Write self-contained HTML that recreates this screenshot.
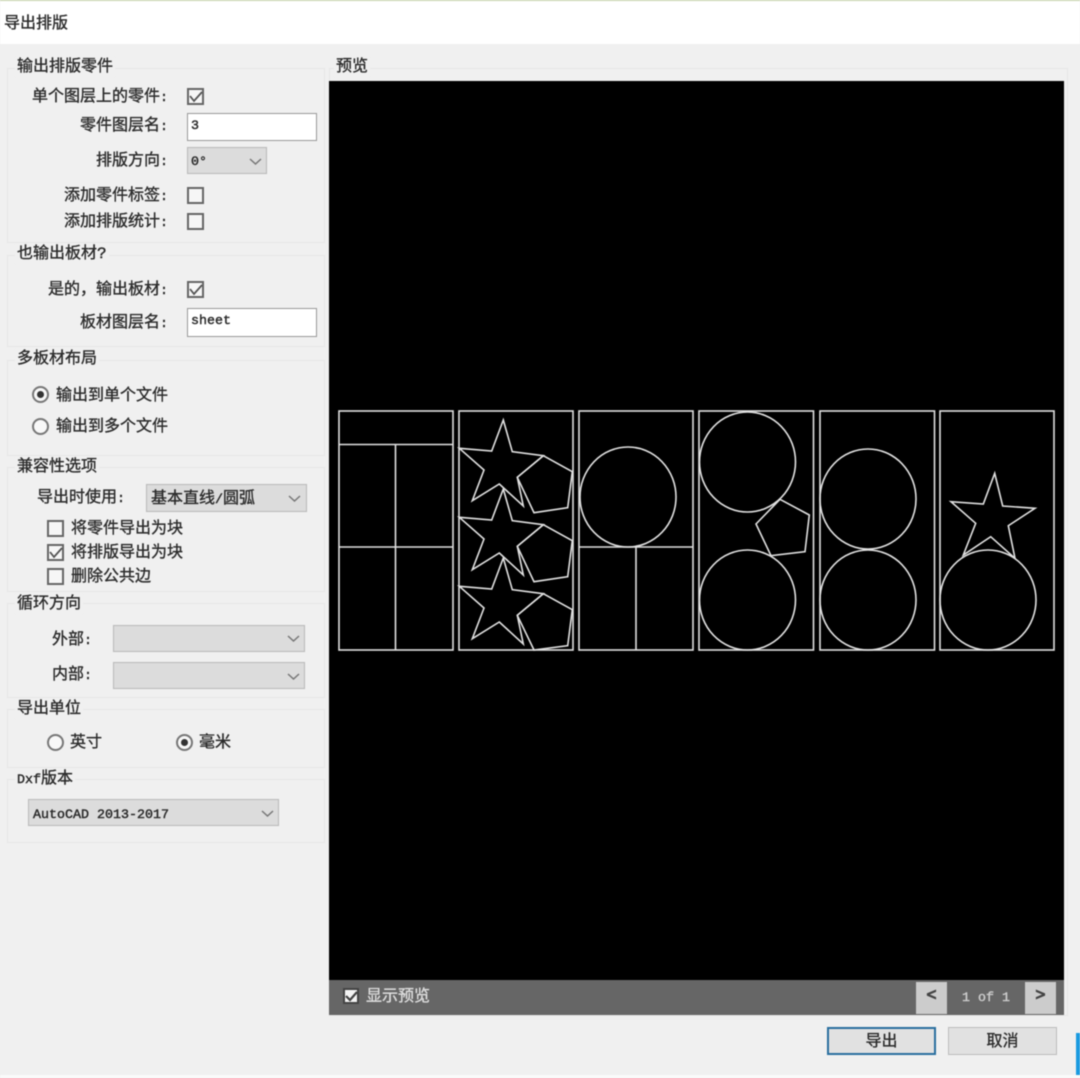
<!DOCTYPE html>
<html lang="zh"><head><meta charset="utf-8"><title>导出排版</title>
<style>
html,body{margin:0;padding:0}
body{width:1080px;height:1078px;position:relative;overflow:hidden;background:#f0f0f0;font:16px/20px "Liberation Sans","Noto Sans CJK SC",sans-serif;color:#2c2c2c}
#all{position:absolute;inset:0;filter:blur(.5px)}
#all div,#all svg{position:absolute;box-sizing:border-box}
.t{white-space:nowrap;height:20px;transform:translateY(1px);-webkit-text-stroke:.35px currentColor}
.t i{font:13.33px/20px "Liberation Mono",monospace;font-style:normal;color:#2c2c2c;-webkit-text-stroke:.45px currentColor}
.g{border:1px solid #e6e6e6}
.gt{background:#f0f0f0;padding:0 2px;margin-left:-2px}
.cb{width:17px;height:17px;border:2px solid #666;background:#f6f6f6}
.in{background:#fff;border:1.5px solid #999;font:13.33px/26px "Liberation Mono",monospace;padding-left:3px;color:#2c2c2c;-webkit-text-stroke:.45px currentColor}
.co{background:#dcdcdc;border:1.5px solid #b8b8b8}
.r{width:17px;height:17px;border:2px solid #777;border-radius:50%;background:#f8f8f8}
.r.on::after{content:"";position:absolute;left:3px;top:3px;width:7px;height:7px;border-radius:50%;background:#333}
.btn{background:#e1e1e1;text-align:center;line-height:26px;-webkit-text-stroke:.35px currentColor}
</style></head>
<body><div id="all">
<div style="left:0;top:0;width:1080px;height:44px;background:#fff"></div>
<div style="left:0;top:0;width:1080px;height:1px;background:#c6d2a8"></div>
<div style="left:0;top:1075px;width:1080px;height:3px;background:#fafafa"></div>
<div class="t" style="left:4px;top:13px">导出排版</div>

<div class="g" style="left:7px;top:68px;width:318px;height:175px"></div>
<div class="g" style="left:7px;top:255px;width:318px;height:92px"></div>
<div class="g" style="left:7px;top:360px;width:318px;height:96px"></div>
<div class="g" style="left:7px;top:467px;width:318px;height:125px"></div>
<div class="g" style="left:7px;top:603px;width:318px;height:95px"></div>
<div class="g" style="left:7px;top:709px;width:318px;height:59px"></div>
<div class="g" style="left:7px;top:779px;width:318px;height:64px"></div>
<div class="g" style="left:329px;top:68px;width:739px;height:948px"></div>

<div class="t gt" style="left:17px;top:56px">输出排版零件</div>
<div class="t gt" style="left:17px;top:243px">也输出板材<i style="font-size:16px">?</i></div>
<div class="t gt" style="left:17px;top:348px">多板材布局</div>
<div class="t gt" style="left:17px;top:456px">兼容性选项</div>
<div class="t gt" style="left:17px;top:593px">循环方向</div>
<div class="t gt" style="left:17px;top:698px">导出单位</div>
<div class="t gt" style="left:17px;top:768px"><i>Dxf</i>版本</div>
<div class="t gt" style="left:336px;top:56px">预览</div>

<div class="t" style="left:32px;top:86px">单个图层上的零件<i>:</i></div>
<div class="cb" style="left:187px;top:88px"></div>
<div class="t" style="left:80px;top:115px">零件图层名<i>:</i></div>
<div class="in" style="left:187px;top:113px;width:130px;height:28px">3</div>
<div class="t" style="left:96px;top:150px">排版方向<i>:</i></div>
<div class="co" style="left:187px;top:147px;width:80px;height:27px"></div>
<div class="t" style="left:191px;top:150px"><i>0°</i></div>
<div class="t" style="left:64px;top:185px">添加零件标签<i>:</i></div>
<div class="cb" style="left:187px;top:187px"></div>
<div class="t" style="left:64px;top:211px">添加排版统计<i>:</i></div>
<div class="cb" style="left:187px;top:213px"></div>

<div class="t" style="left:48px;top:279px">是的，输出板材<i>:</i></div>
<div class="cb" style="left:187px;top:281px"></div>
<div class="t" style="left:80px;top:312px">板材图层名<i>:</i></div>
<div class="in" style="left:187px;top:308px;width:130px;height:29px">sheet</div>

<div class="r on" style="left:32px;top:386px"></div>
<div class="t" style="left:56px;top:385px">输出到单个文件</div>
<div class="r" style="left:32px;top:418px"></div>
<div class="t" style="left:56px;top:416px">输出到多个文件</div>

<div class="t" style="left:37px;top:487px">导出时使用<i>:</i></div>
<div class="co" style="left:146px;top:484px;width:161px;height:28px"></div>
<div class="t" style="left:151px;top:488px">基本直线<i>/</i>圆弧</div>
<div class="cb" style="left:47px;top:520px"></div>
<div class="t" style="left:71px;top:518px">将零件导出为块</div>
<div class="cb" style="left:47px;top:544px"></div>
<div class="t" style="left:71px;top:542px">将排版导出为块</div>
<div class="cb" style="left:47px;top:568px"></div>
<div class="t" style="left:71px;top:566px">删除公共边</div>

<div class="t" style="left:52px;top:629px">外部<i>:</i></div>
<div class="co" style="left:113px;top:625px;width:192px;height:27px"></div>
<div class="t" style="left:52px;top:664px">内部<i>:</i></div>
<div class="co" style="left:113px;top:662px;width:192px;height:27px"></div>

<div class="r" style="left:47px;top:734px"></div>
<div class="t" style="left:70px;top:732px">英寸</div>
<div class="r on" style="left:176px;top:734px"></div>
<div class="t" style="left:199px;top:732px">毫米</div>

<div class="co" style="left:28px;top:799px;width:251px;height:27px"></div>
<div class="t" style="left:33px;top:803px"><i>AutoCAD 2013-2017</i></div>

<div style="left:329px;top:81px;width:735px;height:899px;background:#000"></div>
<div style="left:329px;top:980px;width:735px;height:35px;background:#666"></div>
<div class="cb" style="left:343px;top:988px;width:16px;height:16px;background:#f4f4f4;border-color:#444"></div>
<div class="t" style="left:366px;top:986px;color:#ddd">显示预览</div>
<div style="left:916px;top:982px;width:31px;height:32px;background:#ccc"></div>
<div class="t" style="left:916px;top:985px;width:31px;text-align:center"><i style="font-size:17px;color:#444;-webkit-text-stroke:1px #444">&lt;</i></div>
<div class="t" style="left:947px;top:986px;width:78px;text-align:center"><i style="color:#ccc;-webkit-text-stroke:.4px #ccc">1 of 1</i></div>
<div style="left:1025px;top:982px;width:31px;height:32px;background:#ccc"></div>
<div class="t" style="left:1025px;top:985px;width:31px;text-align:center"><i style="font-size:17px;color:#444;-webkit-text-stroke:1px #444">&gt;</i></div>

<div class="btn" style="left:827px;top:1027px;width:109px;height:28px;border:2px solid #2a6f9f">导出</div>
<div class="btn" style="left:948px;top:1027px;width:109px;height:28px;border:1.5px solid #bcbcbc;line-height:27px">取消</div>
<div style="left:1076px;top:1033px;width:4px;height:42px;background:#1a9ae0"></div>

<svg style="left:0;top:0" width="1080" height="1078" viewBox="0 0 1080 1078" fill="none">
<g stroke="#555" stroke-width="1.8">
<path d="M190 96l4 5 8-9M190 289l4 5 8-9M50 552l4 5 8-9"/>
</g>
<path d="M346 996l4 4 7-8" stroke="#444" stroke-width="2.200"/>
<g stroke="#777" stroke-width="1.500">
<path d="M250 159l5.500 5 5.500-5M289 496l5.500 5 5.500-5M288 636l5.500 5 5.500-5M288 674l5.500 5 5.500-5M262 811l5.500 5 5.500-5"/>
</g>
<g stroke="#e0e0e0" stroke-width="1.600">
<rect x="339" y="411" width="114" height="239"/>
<rect x="459" y="411" width="114" height="239"/>
<rect x="579" y="411" width="114" height="239"/>
<rect x="699" y="411" width="114.500" height="239"/>
<rect x="820" y="411" width="114.500" height="239"/>
<rect x="940" y="411" width="114" height="239"/>
<path d="M339 444.500H453M339 547H453M395.500 444.500V650"/>
<path d="M579 547H693M636 547V650"/>
<ellipse cx="628" cy="497" rx="48" ry="50"/>
<ellipse cx="747.500" cy="462" rx="48" ry="50"/>
<ellipse cx="747.500" cy="600" rx="48" ry="50"/>
<ellipse cx="868" cy="499" rx="48" ry="50"/>
<ellipse cx="868" cy="600" rx="48" ry="50"/>
<ellipse cx="988" cy="600" rx="48" ry="50"/>
<path d="M780 499.300L809.300 515 805 551.700 771 555.700 756 524Z"/>
<path d="M994.700 473.300L1002.700 506 1035 508.300 1008.300 525.700 1015 558.300 990.700 536.700 963.300 555 975.700 523.300 951 501.700 983.300 504Z"/>
<path d="M503.300 420L512.300 451.700 543.300 455.700 517.300 477.300 523.300 506 499.300 484 472.300 500.700 484 470 459.300 448.300 491.700 451Z"/>
<path d="M503.300 489L512.300 520.700 543.300 524.700 517.300 546.300 523.300 575 499.300 553 472.300 569.700 484 539 459.300 517.300 491.700 520Z"/>
<path d="M503.300 558L512.300 589.700 543.300 593.700 517.300 615.300 523.300 644 499.300 622 472.300 638.700 484 608 459.300 586.300 491.700 589Z"/>
<path d="M543.300 455.700L572.300 471.700 567.700 507.700 534 512.700 517.300 477.300Z"/>
<path d="M543.300 524.700L572.300 540.700 567.700 576.700 534 581.700 517.300 546.300Z"/>
<path d="M543.300 593.700L572.300 609.700 567.700 645.700 534 650 517.300 615.300Z"/>
</g>
</svg>
</div></body></html>
